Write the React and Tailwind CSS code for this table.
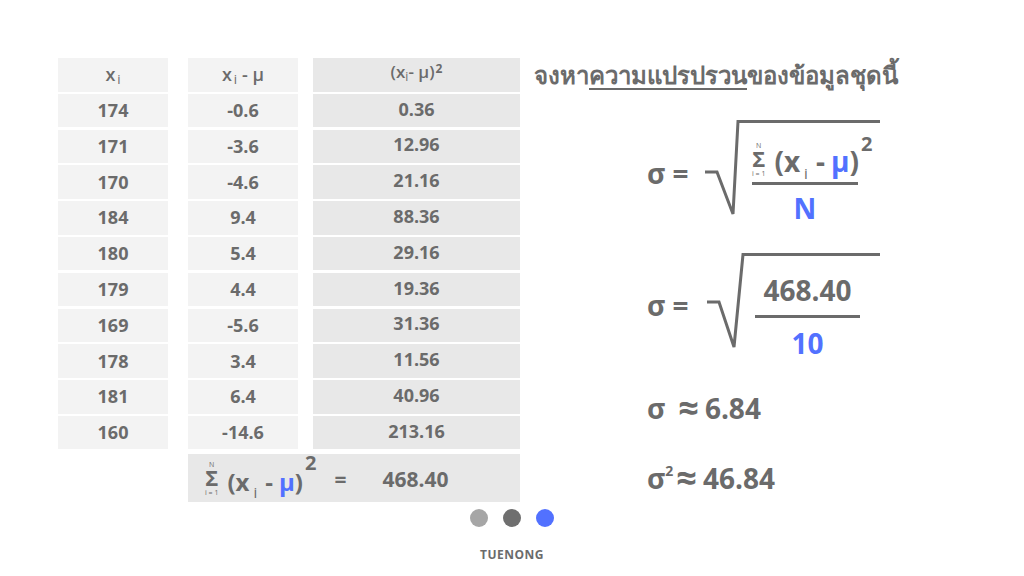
import React from 'react';

const col1 = ['174', '171', '170', '184', '180', '179', '169', '178', '181', '160'];
const col2 = ['-0.6', '-3.6', '-4.6', '9.4', '5.4', '4.4', '-5.6', '3.4', '6.4', '-14.6'];
const col3 = ['0.36', '12.96', '21.16', '88.36', '29.16', '19.36', '31.36', '11.56', '40.96', '213.16'];

const Cell = ({ children, className = '' }) => (
  <div className={`h-[33.5px] flex items-center justify-center text-[18px] font-bold ${className}`}>
    {children}
  </div>
);

const SigmaStack = () => (
  <div className="flex flex-col items-center">
    <span className="text-[7px] font-normal leading-[8px]">N</span>
    <span className="text-[22px] font-bold leading-[17px]">Σ</span>
    <span className="text-[7px] font-normal leading-[10px] pt-[2px] whitespace-nowrap">i = 1</span>
  </div>
);

const SumExpr = ({ size }) => (
  <div className="flex items-end">
    <SigmaStack />
    <span className={`${size} font-bold leading-none ml-[9px] mb-[4px]`}>(x</span>
    <span className="text-[15px] font-normal leading-none mb-[-2px] ml-[4px]">i</span>
    <span className={`${size} font-bold leading-none ml-[8px] mb-[4px]`}>-</span>
    <span className={`${size} font-bold leading-none ml-[6px] mb-[4px] text-[#5271ff]`}>μ</span>
    <span className={`${size} font-bold leading-none mb-[4px]`}>)</span>
    <span className="text-[20px] font-bold leading-none self-start mt-[-8px] ml-[2px]">2</span>
  </div>
);

const Radical = ({ w, h, tickY, bottomX }) => (
  <svg width={w} height={h} viewBox={`0 0 ${w} ${h}`} className="shrink-0">
    <path
      d={`M0 ${tickY} L12 ${tickY} L${bottomX} ${h - 2} L${w - 2} 1.5 L${w} 1.5`}
      fill="none"
      stroke="#6b6b6b"
      strokeWidth="3"
    />
  </svg>
);

export default function App() {
  return (
    <div className="w-[1024px] h-[576px] bg-white flex flex-col text-[#6b6b6b] font-['Open_Sans','Noto_Sans',sans-serif] overflow-hidden">
      <div className="flex pl-[58px] pt-[58px]">
        {/* table */}
        <div className="w-[462px] flex flex-col">
          <div className="flex">
            <div className="w-[110px] flex flex-col gap-[2.3px]">
              <Cell className="bg-[#f3f3f3]">
                <span className="font-semibold">x</span>
                <span className="text-[13px] font-normal mt-[10px] ml-[2px]">i</span>
              </Cell>
              {col1.map((v) => (
                <Cell key={v} className="bg-[#f3f3f3]">{v}</Cell>
              ))}
            </div>
            <div className="w-[110px] ml-[20px] flex flex-col gap-[2.3px]">
              <Cell className="bg-[#f3f3f3]">
                <span className="font-semibold">x</span>
                <span className="text-[13px] font-normal mt-[10px] ml-[2px]">i</span>
                <span className="font-semibold ml-[5px]">- μ</span>
              </Cell>
              {col2.map((v) => (
                <Cell key={v} className="bg-[#f3f3f3]">{v}</Cell>
              ))}
            </div>
            <div className="w-[207px] ml-[15px] flex flex-col gap-[2.3px]">
              <Cell className="bg-[#e8e8e8] pb-[6px]">
                <span className="font-semibold text-[17px]">(x</span>
                <span className="text-[12px] font-normal mt-[10px]">i</span>
                <span className="font-semibold text-[17px]">- μ)</span>
                <span className="text-[12px] font-bold self-start mt-[2px] ml-[1px]">2</span>
              </Cell>
              {col3.map((v) => (
                <Cell key={v} className="bg-[#e8e8e8] pb-[3px]">{v}</Cell>
              ))}
            </div>
          </div>
          <div className="ml-[130px] mt-[4.5px] w-[332px] h-[48px] bg-[#e8e8e8] flex items-center pl-[17px] pt-[4px]">
            <SumExpr size="text-[24px]" />
            <span className="text-[21px] font-bold ml-[18px]">=</span>
            <span className="text-[21px] font-bold ml-[36px]">468.40</span>
          </div>
        </div>

        {/* right panel */}
        <div className="ml-[14px] flex flex-col">
          <div className="h-[34px] text-[24px] font-semibold leading-[34px] whitespace-nowrap">
            จงหา<span className="underline underline-offset-4 decoration-2">ความแปรปรวน</span>ของข้อมูลชุดนี้
          </div>

          <div className="mt-[28px] h-[110px] flex items-start pl-[113px]">
            <div className="w-[58px] pt-[36px] text-[28px] font-bold leading-[34px] whitespace-nowrap">σ =</div>
            <Radical w={35} h={96} tickY={52} bottomX={28} />
            <div className="w-[140px] border-t-[3px] border-[#6b6b6b] pl-[12px]">
              <div className="h-[59px] flex items-end pb-[3px]">
                <SumExpr size="text-[28px]" />
              </div>
              <div className="h-[3px] w-[106px] bg-[#6b6b6b]" />
              <div className="w-[106px] mt-[6px] text-center text-[28px] font-bold leading-[34px] text-[#5271ff]">N</div>
            </div>
          </div>

          <div className="mt-[23px] h-[110px] flex items-start pl-[113px]">
            <div className="w-[60px] pt-[35px] text-[28px] font-bold leading-[34px] whitespace-nowrap">σ =</div>
            <Radical w={38} h={96} tickY={49} bottomX={27} />
            <div className="w-[135px] border-t-[3px] border-[#6b6b6b] pl-[10px]">
              <div className="h-[59px] w-[105px] flex items-end justify-center pb-[8px] text-[28px] font-bold leading-[34px]">
                468.40
              </div>
              <div className="h-[3px] w-[105px] bg-[#6b6b6b]" />
              <div className="w-[105px] mt-[8px] text-center text-[28px] font-bold leading-[34px] text-[#5271ff]">10</div>
            </div>
          </div>

          <div className="mt-[25px] pl-[113px] h-[40px] text-[28px] font-bold leading-[40px] whitespace-nowrap flex items-center">
            <span>σ</span>
            <span className="text-[36px] ml-[13px]">≈</span>
            <span className="ml-[6px]">6.84</span>
          </div>
          <div className="mt-[30px] pl-[113px] h-[40px] text-[28px] font-bold leading-[40px] whitespace-nowrap flex items-center">
            <span>σ</span>
            <span className="text-[14px] leading-none self-start mt-[6px]">2</span>
            <span className="text-[36px] ml-[3px]">≈</span>
            <span className="ml-[6px]">46.84</span>
          </div>
        </div>
      </div>

      <div className="mt-[7px] flex justify-center gap-[15px]">
        <div className="w-[18px] h-[18px] rounded-full bg-[#a6a6a6]" />
        <div className="w-[18px] h-[18px] rounded-full bg-[#6f6f6f]" />
        <div className="w-[18px] h-[18px] rounded-full bg-[#5271ff]" />
      </div>
      <div className="mt-[20px] text-center text-[12px] font-bold leading-[16px] tracking-[0.5px]">TUENONG</div>
    </div>
  );
}
